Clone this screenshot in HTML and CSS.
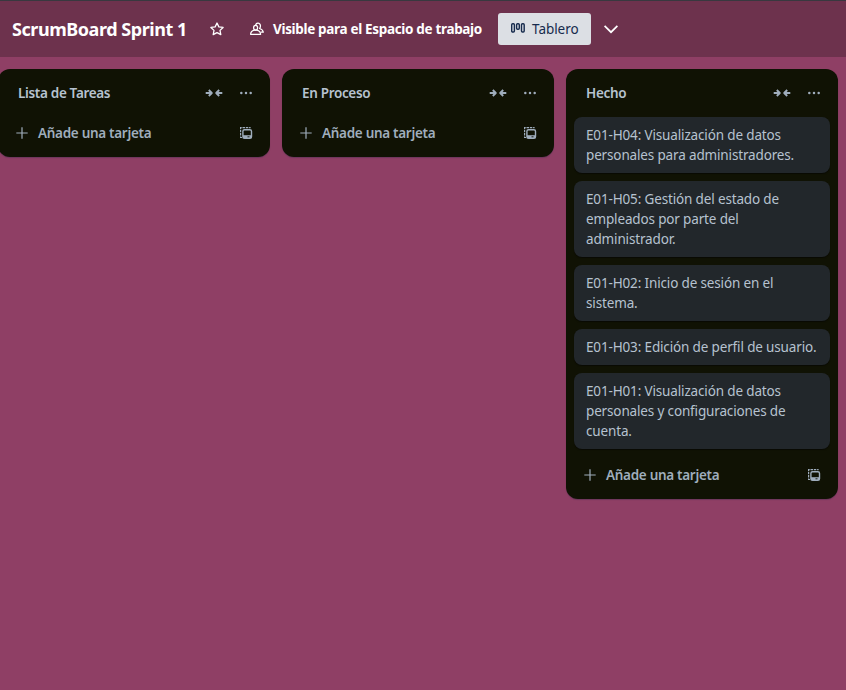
FILE: index.html
```html
<!DOCTYPE html>
<html lang="es">
<head>
<meta charset="utf-8">
<title>ScrumBoard Sprint 1</title>
<link rel="stylesheet" href="styles.css">
</head>
<body>
<svg class="defs" aria-hidden="true">
  <symbol id="collapse" viewBox="0 0 18 16"><path d="M.7 8h6M3.800 5l3 3-3 3M17.300 8h-6M14.200 5l-3 3 3 3" fill="none" stroke="currentColor" stroke-width="1.900" stroke-linejoin="round"/></symbol>
  <symbol id="more" viewBox="0 0 16 16"><g fill="currentColor"><circle cx="3.300" cy="8" r="1.250"/><circle cx="8" cy="8" r="1.250"/><circle cx="12.700" cy="8" r="1.250"/></g></symbol>
  <symbol id="plus" viewBox="0 0 16 16"><path d="M8 2.300v11.400M2.300 8h11.400" fill="none" stroke="currentColor" stroke-width="1.200"/></symbol>
  <symbol id="template" viewBox="0 0 16 16"><path d="M4 12.500H2.600V2.600h10" fill="none" stroke="currentColor" stroke-width="1.200" stroke-dasharray="2.500 .8"/><rect x="4.900" y="4.700" width="8.600" height="8.700" rx="1.600" fill="none" stroke="currentColor" stroke-width="1.400"/><path d="M5 10.200h8.500v2.900H5z" fill="currentColor"/><path d="M9.500 11.800h2" stroke="#101204" stroke-width=".9"/></symbol>
</svg>
<header class="bar">
  <h1 class="title">ScrumBoard Sprint 1</h1>
  <svg class="star" viewBox="0 0 16 16"><path d="M8 2l1.850 3.900 4.250.55-3.100 2.950.8 4.250L8 11.600l-3.800 2.050.8-4.250-3.100-2.950 4.250-.55z" fill="none" stroke="currentColor" stroke-width="1.300" stroke-linejoin="round"/></svg>
  <svg class="people" viewBox="0 0 16 16"><g fill="none" stroke="currentColor" stroke-width="1.250" stroke-linejoin="round"><ellipse cx="6.600" cy="6.800" rx="2" ry="2.400"/><path d="M1.600 13.300c0-2.200 1.300-3.500 3.700-4.200h2.600c2.400.7 3.700 2 3.700 4.200z"/><path d="M6.600 4.200C7 2.600 8.100 2.100 9.100 2.200c1.800.2 2.600 1.800 2.300 3.500-.1.800-.4 1.400-.8 1.800 2.300.8 3.500 1.800 3.700 3.700h-2.600"/></g></svg>
  <span class="visibility">Visible para el Espacio de trabajo</span>
  <div class="view">
    <svg class="board-icon" viewBox="0 0 16 16"><g fill="none" stroke="currentColor" stroke-width="1.400"><rect x="1.700" y="3.700" width="2.700" height="8.300" rx="1"/><rect x="6.600" y="3.700" width="2.700" height="5.600" rx="1"/><rect x="11.500" y="3.700" width="2.700" height="8.300" rx="1"/></g></svg>
    <span>Tablero</span>
  </div>
  <svg class="chevron" viewBox="0 0 16 16"><path d="M1.600 4.800L8 11.200l6.400-6.400" fill="none" stroke="currentColor" stroke-width="1.700"/></svg>
</header>
<main class="board">
  <section class="list">
    <div class="head"><h2>Lista de Tareas</h2><svg class="collapse"><use href="#collapse"/></svg><svg class="icon"><use href="#more"/></svg></div>
    <div class="add"><svg class="icon"><use href="#plus"/></svg><span>Añade una tarjeta</span><svg class="icon"><use href="#template"/></svg></div>
  </section>
  <section class="list">
    <div class="head"><h2>En Proceso</h2><svg class="collapse"><use href="#collapse"/></svg><svg class="icon"><use href="#more"/></svg></div>
    <div class="add"><svg class="icon"><use href="#plus"/></svg><span>Añade una tarjeta</span><svg class="icon"><use href="#template"/></svg></div>
  </section>
  <section class="list">
    <div class="head"><h2>Hecho</h2><svg class="collapse"><use href="#collapse"/></svg><svg class="icon"><use href="#more"/></svg></div>
    <div class="cards">
      <article class="card">E01-H04: Visualización de datos<br>personales para administradores.</article>
      <article class="card">E01-H05: Gestión del estado de<br>empleados por parte del<br>administrador.</article>
      <article class="card">E01-H02: Inicio de sesión en el<br>sistema.</article>
      <article class="card">E01-H03: Edición de perfil de usuario.</article>
      <article class="card">E01-H01: Visualización de datos<br>personales y configuraciones de<br>cuenta.</article>
    </div>
    <div class="add"><svg class="icon"><use href="#plus"/></svg><span>Añade una tarjeta</span><svg class="icon"><use href="#template"/></svg></div>
  </section>
</main>
</body>
</html>
```
FILE: styles.css
```css
* { box-sizing: border-box; }
body {
  margin: 0;
  height: 690px;
  overflow: hidden;
  background: #8f3f65;
  font: 13.500px/20px "Noto Sans", "Open Sans", sans-serif;
  letter-spacing: -0.150px;
  color: #b6c2cf;
}
svg { flex: none; display: block; }
.defs { position: absolute; width: 0; height: 0; }
.bar {
  display: flex;
  align-items: center;
  height: 57px;
  padding-left: 12px;
  border-top: 1px solid #38383f;
  background: #6d324d;
  color: #fff;
  white-space: nowrap;
}
.title { width: 197px; margin: 0; font-size: 18px; line-height: 24px; font-weight: 700; letter-spacing: -0.450px; }
.star { width: 16px; height: 16px; }
.people { width: 16px; height: 16px; margin-left: 24px; }
.visibility { width: 225px; margin-left: 8px; font-weight: 700; letter-spacing: -0.330px; }
.view {
  display: flex;
  width: 93px;
  height: 32px;
  padding: 6px 0 0 12px;
  border-radius: 3px;
  background: #dcdfe4;
  color: #172b4d;
}
.view span { letter-spacing: -0.050px; }
.board-icon { width: 16px; height: 16px; margin: 1px 6px 0 0; }
.chevron { width: 16px; height: 16px; margin-left: 12px; }
.board { display: flex; align-items: flex-start; gap: 12px; margin-left: -2px; padding-top: 12px; }
.list {
  flex: none;
  width: 272px;
  padding: 8px;
  border-radius: 12px;
  background: #101204;
  box-shadow: 0 1px 1px rgba(9, 30, 66, .25);
  white-space: nowrap;
}
.head { display: flex; align-items: center; height: 32px; padding: 0 8px 0 12px; }
.head h2 { flex: 1; margin: 0; font-size: 13.500px; font-weight: 600; letter-spacing: -0.330px; }
.head svg, .add svg { color: #9fadbc; }
.collapse { width: 18px; height: 16px; margin-right: 15px; }
.icon { width: 16px; height: 16px; }
.cards { display: flex; flex-direction: column; gap: 8px; padding: 8px 0 2px; }
.card {
  padding: 8px 12px;
  border-radius: 8px;
  background: #22272b;
  box-shadow: 0 1px 1px rgba(3, 4, 4, .5);
}
.add { display: flex; align-items: center; height: 32px; margin-top: 8px; padding: 0 8px; color: #9fadbc; font-weight: 600; }
.add span { flex: 1; margin-left: 8px; letter-spacing: -0.300px; }
```
